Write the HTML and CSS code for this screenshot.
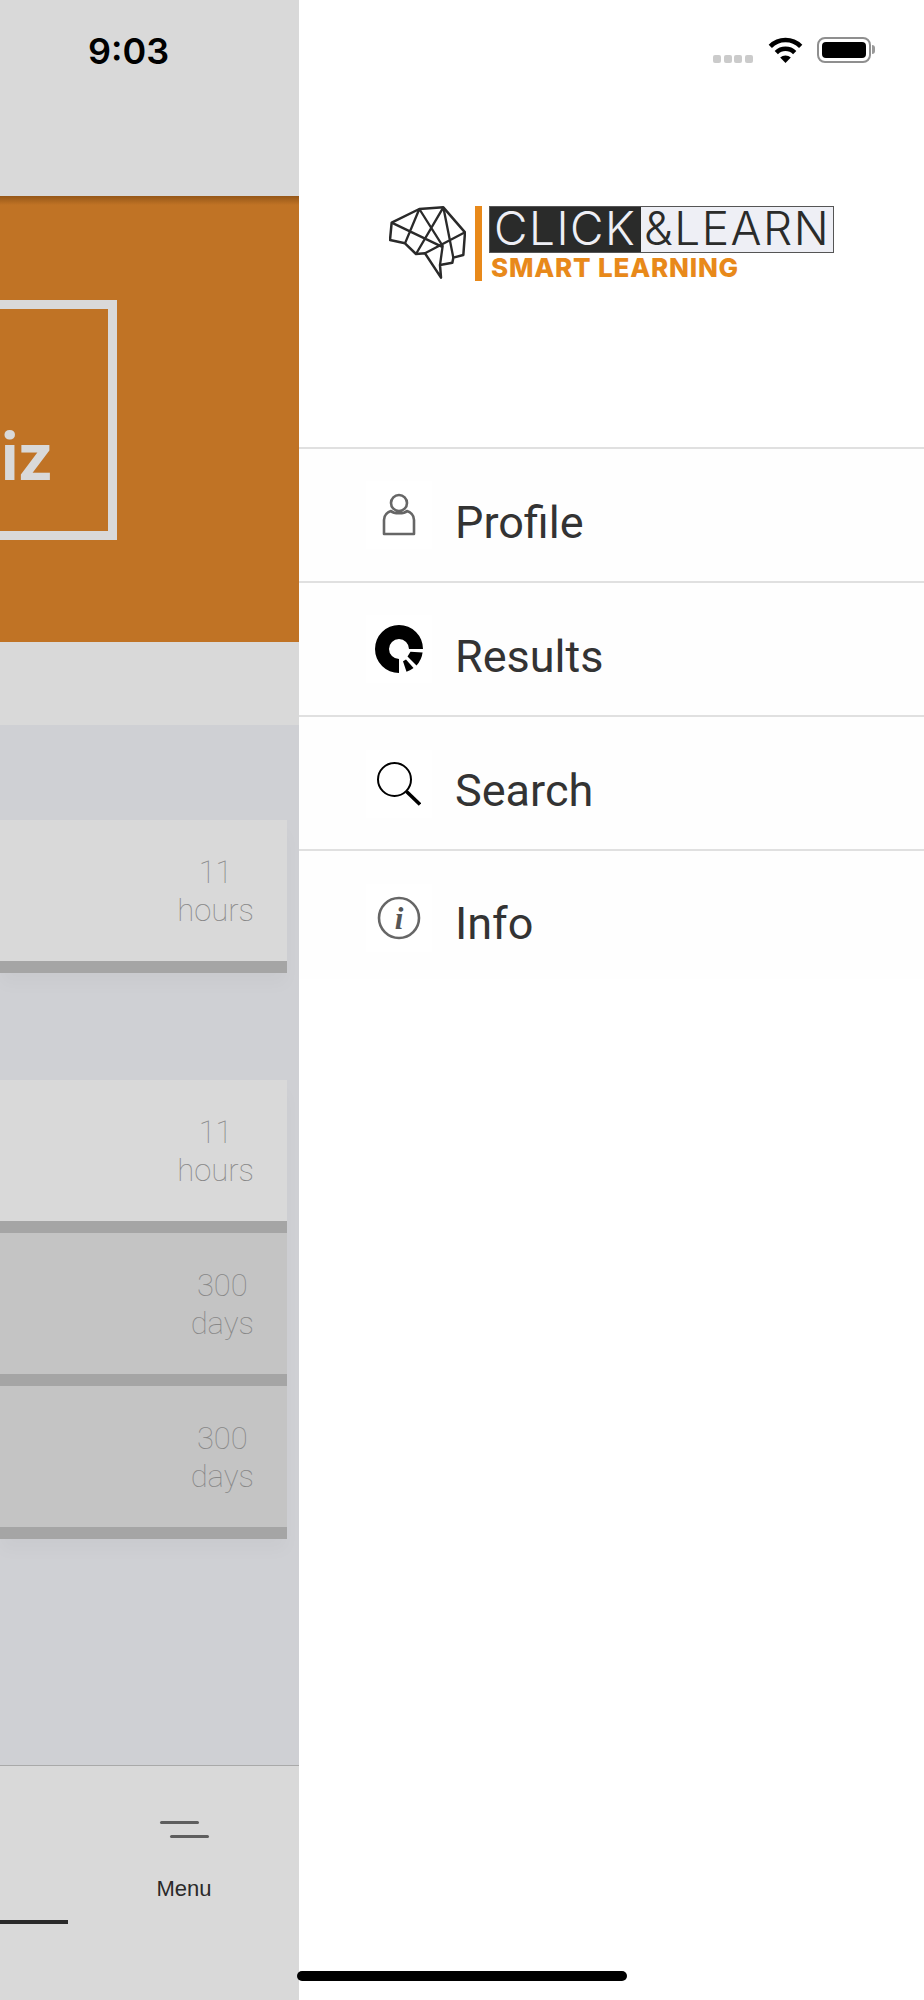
FILE: index.html
```html
<!DOCTYPE html>
<html lang="en">
<head>
<meta charset="utf-8">
<title>Click &amp; Learn menu</title>
<link rel="stylesheet" href="styles.css">
</head>
<body>
<div class="screen">
  <div class="back">
    <div class="back-status"><span class="time">9:03</span></div>
    <div class="hero">
      <div class="quiz"><span class="quiz-label">iz</span></div>
    </div>
    <div class="band"></div>
    <div class="list">
      <div class="card"><div class="card-body"><div class="age age-h">11<br>hours</div></div></div>
      <div class="group">
        <div class="card"><div class="card-body"><div class="age age-h">11<br>hours</div></div></div>
        <div class="card card-dim"><div class="card-body"><div class="age age-d">300<br>days</div></div></div>
        <div class="card card-dim"><div class="card-body"><div class="age age-d">300<br>days</div></div></div>
      </div>
    </div>
    <div class="tabbar">
      <div class="tab-underline"></div>
      <div class="tab-menu">
        <div class="menu-icon"><i class="line"></i><i class="line line-b"></i></div>
        <span class="menu-label">Menu</span>
      </div>
    </div>
  </div>

  <div class="drawer">
    <div class="status">
      <div class="dots"><i></i><i></i><i></i><i></i></div>
      <svg class="wifi" viewBox="0 0 35 26" aria-hidden="true">
        <path d="M2.3 9.3A21.5 21.5 0 0 1 32.7 9.3" fill="none" stroke="#000" stroke-width="4.6"/>
        <path d="M8.3 15.5A13 13 0 0 1 26.7 15.5" fill="none" stroke="#000" stroke-width="4.6"/>
        <path d="M17.5 26L12.2 20.6A7.5 7.5 0 0 1 22.8 20.6Z" fill="#000"/>
      </svg>
      <div class="battery"><div class="battery-fill"></div></div>
      <div class="battery-cap"></div>
    </div>

    <div class="logo">
      <svg class="brain" viewBox="27 48 231 219" aria-hidden="true">
        <path d="M35 98L118 57L190 52L255 127L250 195L220 203L217 218L180 225L183 263L135 190L108 192L75 160L30 150Z" fill="none" stroke="#2a2a2a" stroke-width="7.5" stroke-linejoin="round"/>
        <path d="M118 57L75 160M118 57L188 168L180 225M190 52L108 192M35 98L190 172M190 52L220 203M255 127L135 190" fill="none" stroke="#2a2a2a" stroke-width="7"/>
      </svg>
      <div class="logo-bar"></div>
      <div class="logo-words">
        <div class="wordmark"><span class="word-dark">CLICK</span><span class="word-light">&amp;LEARN</span></div>
        <div class="tagline">SMART LEARNING</div>
      </div>
    </div>

    <nav class="nav">
      <div class="nav-row">
        <div class="tile">
          <svg class="icon" viewBox="0 0 48 48" aria-hidden="true">
            <circle cx="24" cy="12" r="8" fill="none" stroke="#666" stroke-width="2.6"/>
            <path d="M16 20C13 21 9 24 9 29V43H39V29C39 24 35 21 32 20C29 23 19 23 16 20Z" fill="none" stroke="#666" stroke-width="2.6" stroke-linejoin="round"/>
          </svg>
        </div>
        <span class="nav-label">Profile</span>
      </div>
      <div class="nav-row">
        <div class="tile">
          <svg class="icon" viewBox="0 0 48 48" aria-hidden="true">
            <path d="M48 24A24 24 0 1 0 24 48V34A10 10 0 1 1 34 24Z" fill="#000"/>
            <path d="M47.6 27.5L35.5 26.8L32.5 31.5L41.5 40.5A24 24 0 0 0 47.6 27.5Z" fill="#000"/>
            <path d="M31 34.5L28 36.2L31.5 46.8A24 24 0 0 0 38.5 43Z" fill="#000"/>
          </svg>
        </div>
        <span class="nav-label">Results</span>
      </div>
      <div class="nav-row">
        <div class="tile tile-search">
          <svg class="icon icon-search" viewBox="0 0 44 44" aria-hidden="true">
            <circle cx="17.5" cy="17.5" r="16.5" fill="none" stroke="#000" stroke-width="2"/>
            <path d="M29.5 29.5L43 42.5" fill="none" stroke="#000" stroke-width="3.6"/>
          </svg>
        </div>
        <span class="nav-label">Search</span>
      </div>
      <div class="nav-row nav-row-last">
        <div class="tile tile-info">
          <svg class="icon" viewBox="0 0 48 48" aria-hidden="true">
            <circle cx="24" cy="24" r="20" fill="none" stroke="#666" stroke-width="2.6"/>
            <text class="info-i" x="24" y="35" text-anchor="middle">i</text>
          </svg>
        </div>
        <span class="nav-label">Info</span>
      </div>
    </nav>
  </div>

  <div class="home-indicator"></div>
</div>
</body>
</html>
```
FILE: styles.css
```css
* { box-sizing: border-box; }
html, body { margin: 0; padding: 0; background: #fff; }
.screen {
  position: relative;
  display: flex;
  width: 924px;
  height: 2000px;
  overflow: hidden;
}

/* dimmed page behind the drawer */
.back {
  display: flex;
  flex-direction: column;
  flex: 0 0 299px;
  height: 2000px;
  overflow: hidden;
  background: #d9d9d9;
}
.back-status {
  flex: 0 0 196px;
  padding-top: 29px;
  padding-left: 88px;
}
.time {
  font: 600 36px/44px Inter, "Liberation Sans", sans-serif;
  color: #000;
}
.hero {
  flex: 0 0 446px;
  padding-top: 104px;
  background: linear-gradient(rgba(70, 35, 0, 0.35), rgba(70, 35, 0, 0) 9px), #c07325;
}
.quiz {
  position: relative;
  width: 117px;
  height: 240px;
  border: 9px solid #d9d9d9;
  border-left: 0;
  padding-top: 110px;
  padding-right: 56px;
  text-align: right;
}
.quiz-label {
  font: 700 66px/78px Roboto, sans-serif;
  color: #d9d9d9;
}
.band { flex: 0 0 83px; }
.list {
  flex: 0 0 1040px;
  padding-top: 95px;
  background: #cfd0d4;
}
.group {
  margin-top: 107px;
  box-shadow: 0 12px 16px rgba(0, 0, 0, 0.025);
}
.list > .card { box-shadow: 0 12px 16px rgba(0, 0, 0, 0.025); }
.list > .card, .group { width: 287px; }
.card {
  height: 153px;
  background: #d9d9d9;
  border-bottom: 12px solid #a5a5a5;
}
.card-dim { background: #c4c4c4; }
.card-body {
  display: flex;
  justify-content: flex-end;
  height: 141px;
  padding-top: 34px;
  padding-right: 33px;
}
.age {
  font: 100 31px/38px Roboto, sans-serif;
  color: #888;
  text-align: center;
}
.tabbar {
  position: relative;
  flex: 1;
  border-top: 1px solid #a9a9a9;
}
.tab-underline {
  width: 68px;
  height: 4px;
  margin-top: 154px;
  background: #2a2a2a;
}
.tab-menu {
  position: absolute;
  top: 55px;
  left: 154px;
  width: 60px;
  display: flex;
  flex-direction: column;
  align-items: center;
}
.menu-icon {
  display: flex;
  flex-direction: column;
  gap: 10.5px;
  width: 49px;
}
.line {
  display: block;
  width: 39px;
  height: 3px;
  border-radius: 2px;
  background: #5e5e5e;
}
.line-b { margin-left: 10px; }
.menu-label {
  margin-top: 38px;
  font: 400 22px/26px "Liberation Sans", Arial, sans-serif;
  color: #2a2a2a;
}

/* drawer */
.drawer {
  flex: 1;
  height: 2000px;
  background: #fff;
}
.status {
  display: flex;
  align-items: flex-start;
  height: 206px;
  padding-top: 37px;
  padding-left: 414px;
}
.dots {
  display: flex;
  gap: 2.6px;
  margin-top: 18px;
  margin-right: 15px;
}
.dots i {
  display: block;
  width: 8px;
  height: 8px;
  border-radius: 2px;
  background: #cbcbcb;
}
.wifi {
  width: 35px;
  height: 26px;
  margin-right: 14px;
}
.battery {
  width: 54px;
  height: 26px;
  padding: 3px;
  border: 2.5px solid #8f8f8f;
  border-radius: 8px;
}
.battery-fill {
  width: 100%;
  height: 100%;
  border-radius: 4px;
  background: #000;
}
.battery-cap {
  width: 3px;
  height: 9px;
  margin-top: 8px;
  margin-left: 1px;
  border-radius: 0 3px 3px 0;
  background: #999;
}

.logo {
  display: flex;
  align-items: flex-start;
  height: 241px;
  padding-left: 90px;
}
.brain {
  display: block;
  width: 77px;
  height: 73px;
  margin-right: 9px;
}
.logo-bar {
  width: 7px;
  height: 75px;
  margin-right: 7px;
  background: #e8891a;
}
.wordmark {
  display: flex;
  width: 345px;
  height: 47px;
  border: 1.5px solid #555;
  font: 300 46px/43px Inter, sans-serif;
  letter-spacing: 1.5px;
}
.word-dark {
  flex: 0 0 151px;
  padding-left: 4px;
  background: #2a2b2a;
  color: #eeeff5;
}
.word-light {
  flex: 1;
  padding-left: 3px;
  background: #eeeff5;
  color: #2a2b2a;
}
.tagline {
  margin-top: 2px;
  margin-left: 2px;
  font: 800 26px/26px Inter, sans-serif;
  letter-spacing: 0.8px;
  color: #e8891a;
}

.nav-row {
  display: flex;
  align-items: center;
  height: 134px;
  padding-left: 67px;
  border-top: 2.5px solid #e0e0e0;
  background: #fefefe;
}
.nav-row-last { height: 130px; }
.tile {
  display: flex;
  align-items: center;
  justify-content: center;
  width: 66px;
  height: 68px;
  margin-top: -1px;
  background: #fff;
}
.tile-search { margin-top: 1px; }
.tile-info { margin-top: 5px; }
.icon {
  display: block;
  width: 48px;
  height: 48px;
}
.icon-search { width: 44px; height: 44px; }
.info-i {
  font: italic 700 31px "Liberation Serif", serif;
  fill: #555;
}
.nav-label {
  margin-left: 23px;
  margin-top: 15px;
  font: 400 45px/54px Roboto, sans-serif;
  color: #333;
}
.nav-row-last .nav-label { margin-top: 18px; }
.home-indicator {
  position: absolute;
  left: 297px;
  top: 1971px;
  width: 330px;
  height: 10px;
  border-radius: 5px;
  background: #000;
}
```
